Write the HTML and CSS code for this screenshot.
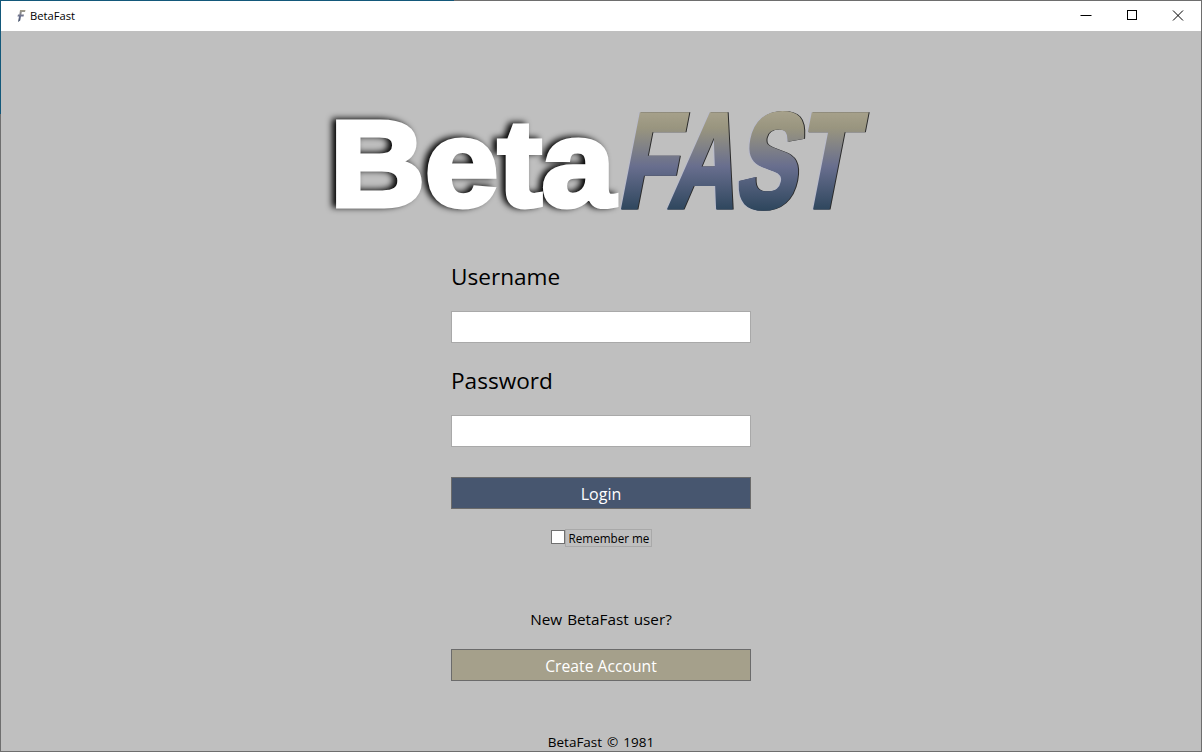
FILE: index.html
```html
<!DOCTYPE html>
<html lang="en">
<head>
<meta charset="utf-8">
<title>BetaFast</title>
<link rel="stylesheet" href="styles.css">
</head>
<body>
<div class="window">
  <header class="titlebar">
    <svg class="app-icon" width="10" height="14" viewBox="0 0 10 14">
      <defs>
        <linearGradient id="iconFill" x1="0" y1="0" x2="0" y2="1">
          <stop offset="0" stop-color="#a5a08b"/>
          <stop offset="0.55" stop-color="#686e8e"/>
          <stop offset="1" stop-color="#3a4a60"/>
        </linearGradient>
      </defs>
      <path d="M4 1H9.500L9 3H5.800L5.300 5.500H8L7.500 7.500H5L4.200 11.500L2 13L3 7.500H1.500L2 5.500H3.400Z" fill="url(#iconFill)"/>
    </svg>
    <span class="app-name">BetaFast</span>
    <div class="controls">
      <span class="control"><svg width="12" height="12" viewBox="0 0 12 12"><path d="M0.500 5.500H11.500" stroke="#000" fill="none"/></svg></span>
      <span class="control"><svg width="12" height="12" viewBox="0 0 12 12"><rect x="1.500" y="0.500" width="9" height="9" stroke="#000" fill="none"/></svg></span>
      <span class="control"><svg width="12" height="12" viewBox="0 0 12 12"><path d="M1 0.500L11 10.500M11 0.500L1 10.500" stroke="#000" fill="none"/></svg></span>
    </div>
  </header>
  <main class="content">
    <svg class="logo" width="560" height="120" viewBox="0 0 560 120" role="img" aria-label="BetaFast">
      <defs>
        <linearGradient id="fastFill" gradientUnits="userSpaceOnUse" x1="0" y1="-99" x2="0" y2="3">
          <stop offset="0" stop-color="#aaa48e"/>
          <stop offset="0.2" stop-color="#99957f"/>
          <stop offset="0.58" stop-color="#686e8e"/>
          <stop offset="1" stop-color="#2f475e"/>
        </linearGradient>
      </defs>
      <g class="beta">
        <text x="9" y="105.500" class="beta-text" textLength="285" lengthAdjust="spacingAndGlyphs">Beta</text>
      </g>
      <g class="fast">
        <text transform="translate(296 106.500) skewX(-11) scale(.72 1)" class="fast-text" fill="url(#fastFill)" stroke="url(#fastFill)" textLength="323" lengthAdjust="spacingAndGlyphs">FAST</text>
      </g>
    </svg>
    <form class="login">
      <label class="field-label">Username</label>
      <input class="field" type="text">
      <label class="field-label field-label-next">Password</label>
      <input class="field" type="password">
      <button class="btn btn-login" type="button">Login</button>
      <div class="remember">
        <input class="remember-box" type="checkbox">
        <span class="remember-text">Remember me</span>
      </div>
      <p class="new-user">New BetaFast user?</p>
      <button class="btn btn-create" type="button">Create Account</button>
    </form>
    <footer class="footer">BetaFast © 1981</footer>
  </main>
</div>
</body>
</html>
```
FILE: styles.css
```css
* { box-sizing: border-box; }
html, body { margin: 0; height: 100%; overflow: hidden; }
body { font-family: "Open Sans", "Noto Sans", sans-serif; color: #000; }
.window {
  position: relative;
  width: 1202px;
  height: 752px;
  display: flex;
  flex-direction: column;
  border: 1px solid #6e6e6e;
  background: #bfbfbf;
}
.window::before {
  content: "";
  position: absolute;
  top: -1px;
  left: -1px;
  width: 454px;
  height: 1px;
  background: #13587a;
}
.window::after {
  content: "";
  position: absolute;
  top: -1px;
  left: -1px;
  width: 1px;
  height: 114px;
  background: #13587a;
}
.titlebar {
  height: 30px;
  flex: none;
  background: #fff;
  display: flex;
  align-items: center;
  padding-left: 15px;
}
.app-icon { margin-right: 4px; }
.app-name { font-size: 11.200px; line-height: 30px; }
.controls { margin-left: auto; display: flex; }
.control { width: 46px; height: 30px; display: flex; align-items: center; justify-content: center; }
.content {
  flex: 1;
  display: flex;
  flex-direction: column;
  align-items: center;
  overflow: hidden;
}
.logo { display: block; margin-top: 69px; flex: none; overflow: visible; }
.beta { filter: drop-shadow(-4px -1px 3px #000); }
.beta-text {
  font-family: "Liberation Sans", Arial, sans-serif;
  font-weight: 700;
  font-size: 122px;
  fill: #fff;
  stroke: #fff;
  stroke-width: 5px;
}
.fast { filter: drop-shadow(1px 0 0 #2a2a2a) drop-shadow(-0.5px 0 0 #b9bbcb); }
.fast-text {
  font-family: "Liberation Sans", Arial, sans-serif;
  font-weight: 700;
  font-size: 134px;
  stroke-width: 5px;
}
.login { width: 300px; margin-top: 42px; display: flex; flex-direction: column; flex: none; }
.field-label { font-size: 22.600px; line-height: 30px; display: block; height: 30px; }
.field-label-next { margin-top: 23px; }
.field {
  display: block;
  width: 300px;
  height: 32px;
  margin: 19px 0 0;
  padding: 0 4px;
  background: #fff;
  border: 1px solid #a9a9a9;
  border-radius: 0;
  outline: none;
  appearance: none;
}
.btn {
  display: block;
  width: 300px;
  height: 32px;
  padding: 2px 0 0;
  color: #fff;
  font-family: inherit;
  font-size: 16px;
  border: 1px solid #6b6b6b;
  border-radius: 0;
}
.btn-login { margin-top: 30px; background: #47566f; }
.btn-create { margin-top: 19px; background: #a5a08b; font-size: 15.700px; }
.remember { display: flex; align-items: flex-start; justify-content: center; margin-top: 20px; height: 18px; padding-left: 1px; }
.remember-box {
  appearance: none;
  width: 14px;
  height: 14px;
  margin: 1px 0 0;
  background: #fff;
  border: 1px solid #707070;
  border-radius: 0;
}
.remember-text {
  height: 18px;
  padding: 0 2px 0 3px;
  font-size: 11.700px;
  line-height: 17px;
  border: 1px solid #a9a9a9;
}
.new-user { margin: 61px 0 0; height: 22px; font-size: 15.300px; word-spacing: 1px; line-height: 22px; text-align: center; }
.footer { margin-top: 52px; font-size: 13.500px; word-spacing: 1.500px; line-height: 18px; text-align: center; flex: none; }
```
